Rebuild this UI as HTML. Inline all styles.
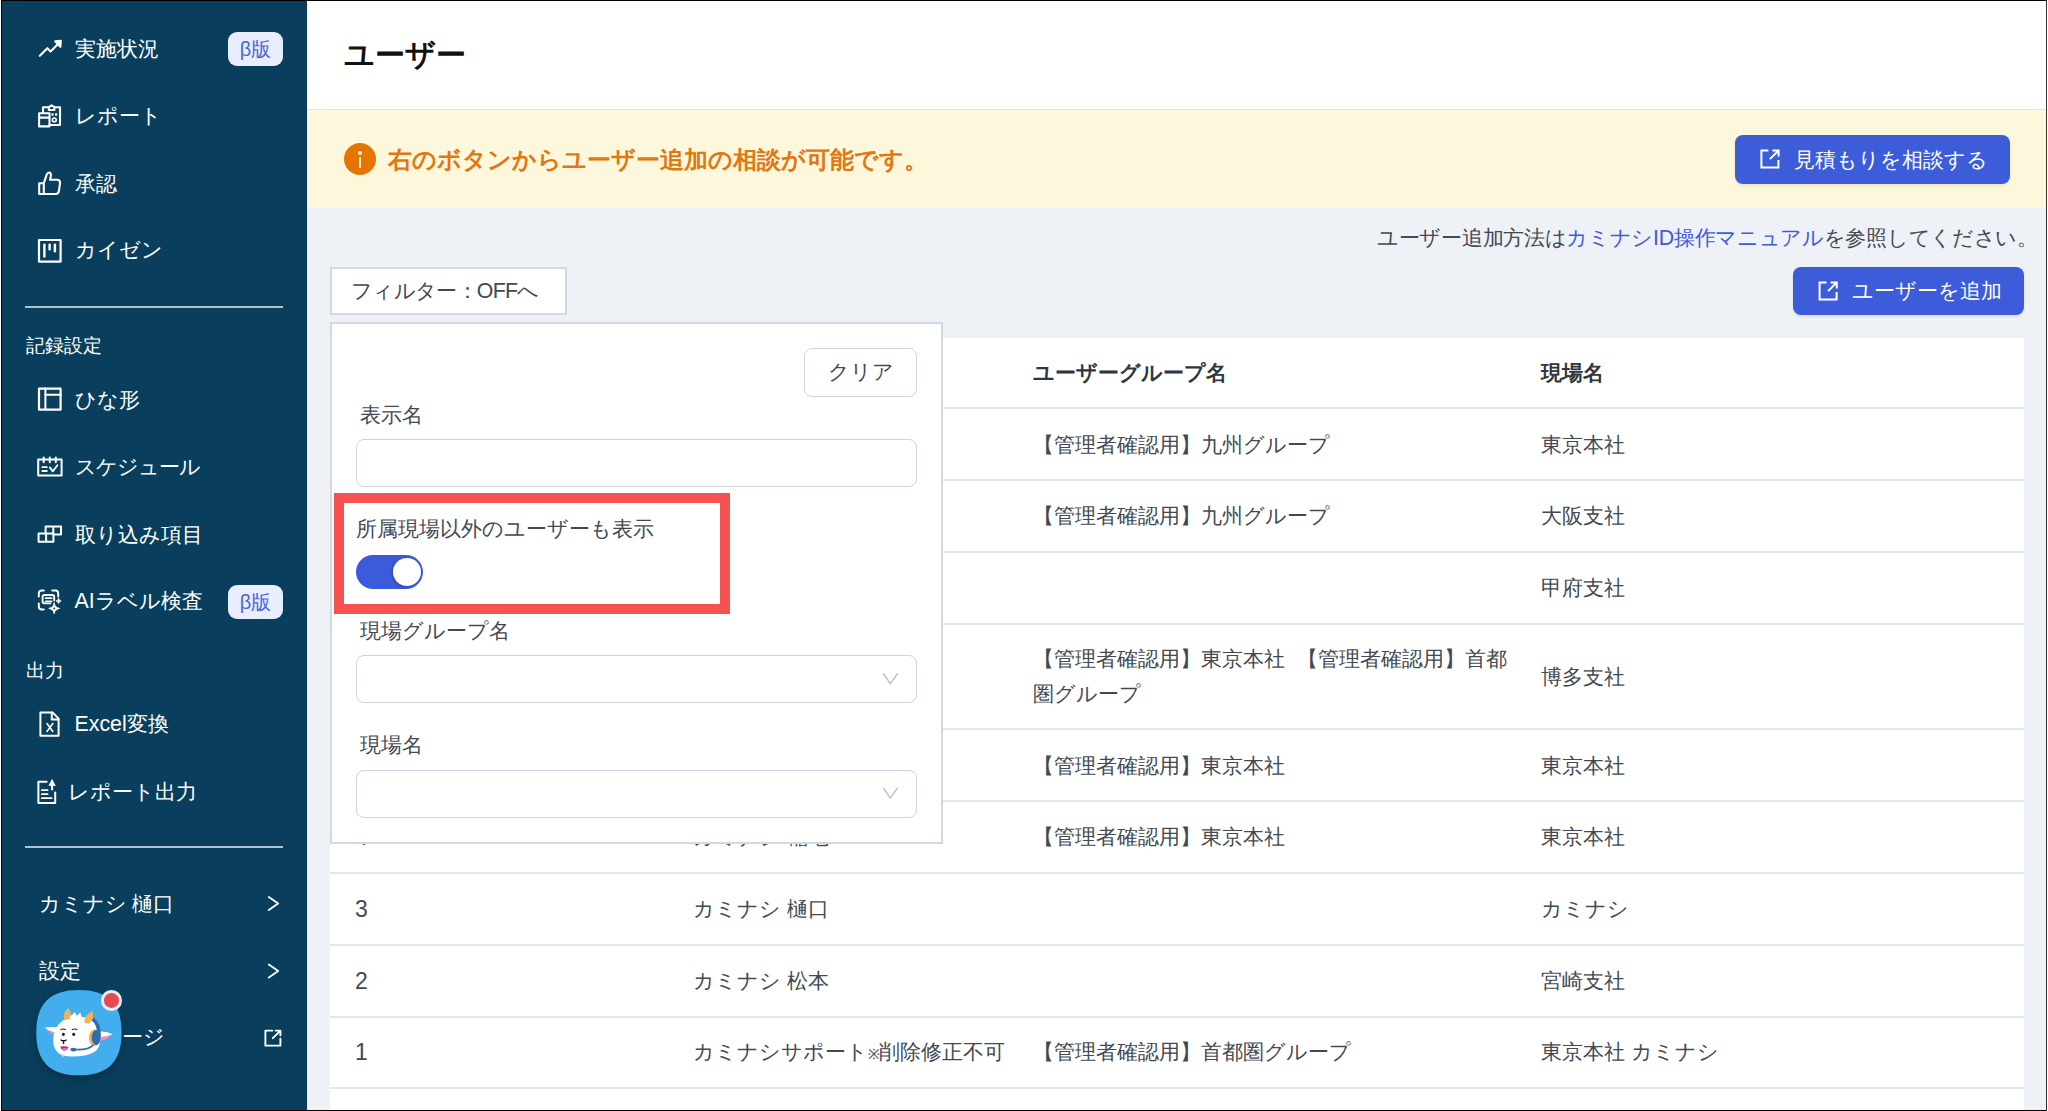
<!DOCTYPE html>
<html><head><meta charset="utf-8">
<style>
*{box-sizing:border-box;margin:0;padding:0}
html,body{width:2048px;height:1111px;overflow:hidden;background:#fff}
body{font-family:"Liberation Sans",sans-serif;position:relative}
.a{position:absolute;white-space:nowrap}
.si{position:absolute;white-space:nowrap;color:#fff;font-size:21.33px;line-height:30px;height:30px}
.sl{position:absolute;white-space:nowrap;color:#fff;font-size:18.67px;line-height:30px;height:30px}
.ic{position:absolute;overflow:visible}
.badge{position:absolute;width:55px;height:34px;border-radius:9px;background:#e8eefd;color:#4c66d9;font-size:20px;line-height:34px;text-align:center}
.dv{position:absolute;left:25px;width:258px;height:2px;background:#b3c0cc}
.t{position:absolute;white-space:nowrap;font-size:21.33px;line-height:30px;height:30px;color:#424952}
.th{font-weight:bold;color:#2f3640}
.rl{position:absolute;left:330px;width:1694px;height:2px;background:#e1e6ed}
</style></head><body>
<!-- background areas -->
<div class="a" style="left:2px;top:1px;width:2044px;height:1109px;background:#eef1f6"></div>
<!-- sidebar -->
<div class="a" style="left:2px;top:1px;width:305px;height:1109px;background:#093f5d"></div>
<div class="a" style="left:306px;top:1px;width:1px;height:1109px;background:#023957"></div>

<!-- header -->
<div class="a" style="left:307px;top:1px;width:1739px;height:108px;background:#fff"></div>
<div class="a" style="left:307px;top:109px;width:1739px;height:1px;background:#dde3ea"></div>
<!-- banner -->
<div class="a" style="left:307px;top:110px;width:1739px;height:98px;background:#fdf8dc"></div>


<!-- ===== SIDEBAR ===== -->
<svg class="ic" style="left:0;top:0" width="310" height="1111" viewBox="0 0 310 1111" fill="none" stroke="#fff" stroke-width="2.1" stroke-linejoin="round" stroke-linecap="round">
 <!-- trend -->
 <polyline points="39.8,55.8 47.4,48.2 50.6,51.4 58,44"/>
 <path d="M55.2,41.3 L60.8,40.9 L60.4,46.7 Z" fill="#fff"/>
 <!-- report -->
 <path d="M43,113 V107.2 H48.8 L51.6,105.4 L54.4,107.2 H60 V125 H49.6"/>
 <path d="M48.8,107.2 V110 H54.4 V107.2"/>
 <rect x="39.1" y="113.2" width="10.4" height="13.2"/>
 <line x1="39.1" y1="117.6" x2="49.5" y2="117.6"/>
 <circle cx="54.3" cy="119.9" r="1.9" stroke-width="1.6"/>
 <rect x="52" y="114" width="1" height="1" stroke-width="1.4"/>
 <rect x="55.6" y="114" width="1" height="1" stroke-width="1.4"/>
 <!-- thumbs -->
 <path d="M39.2,183.2 H43.8 V194 H39.2 Z"/>
 <path d="M43.8,183.2 L46.6,174.8 Q48,172.2 49.6,172.6 Q51.4,173.2 50.8,176.4 L50,179.8 H57.6 Q60.4,180.4 60,183.4 L58.8,191.6 Q58.2,194 55.6,194 H43.8"/>
 <!-- kaizen -->
 <rect x="39" y="240" width="21.6" height="21.6" stroke-width="2.2"/>
 <line x1="44.4" y1="244.6" x2="44.4" y2="256.6" stroke-width="2.4"/>
 <line x1="49.6" y1="244.6" x2="49.6" y2="249.2" stroke-width="2.4"/>
 <line x1="54.9" y1="244.6" x2="54.9" y2="251.2" stroke-width="2.4"/>
 <!-- hinagata -->
 <rect x="39" y="388.6" width="21.6" height="21" stroke-width="2.2"/>
 <line x1="45.4" y1="388.6" x2="45.4" y2="409.6" stroke-width="2"/>
 <line x1="45.4" y1="394.8" x2="60.6" y2="394.8" stroke-width="2"/>
 <!-- schedule -->
 <rect x="38.2" y="459.4" width="23.4" height="16.2" stroke-width="2"/>
 <line x1="43.7" y1="457.4" x2="43.7" y2="462.2" stroke-width="2"/>
 <line x1="49.8" y1="457.4" x2="49.8" y2="462.2" stroke-width="2"/>
 <line x1="55.8" y1="457.4" x2="55.8" y2="462.2" stroke-width="2"/>
 <line x1="42.4" y1="467.2" x2="46.8" y2="467.2" stroke-width="1.8"/>
 <line x1="42.4" y1="471" x2="46.8" y2="471" stroke-width="1.8"/>
 <polyline points="49.8,467.4 52.8,471.4 57.4,465.2" stroke-width="1.8"/>
 <!-- import -->
 <path d="M38.6,533.6 H53.4 V541.8 H38.6 Z M46.1,533.6 V541.8" stroke-width="2"/>
 <path d="M45.6,533.6 V526.4 H61 V534.6 H53.4 M53.3,526.4 V534.6" stroke-width="2"/>
 <!-- AI -->
 <path d="M38.8,596.6 V593.4 Q38.8,590.4 41.8,590.4 H43.8" stroke-width="2"/>
 <path d="M52.2,590.4 H55.4 Q58.2,590.4 58.2,593.4 V596.6" stroke-width="2"/>
 <path d="M38.8,603.6 V606.6 Q38.8,609.6 41.8,609.6 H43.8" stroke-width="2"/>
 <path d="M50.4,603.4 H44.4 Q42.6,603.4 42.6,601.6 V596.8 Q42.6,595 44.4,595 H52.4 Q54.2,595 54.2,596.8 V600.6" stroke-width="1.9"/>
 <line x1="45.6" y1="598.2" x2="51.6" y2="598.2" stroke-width="1.7"/>
 <line x1="45.6" y1="601.4" x2="51.6" y2="601.4" stroke-width="1.7"/>
 <path d="M54.2,603.2 Q54.8,607.6 59.6,608.4 Q54.8,609.2 54.2,613.6 Q53.6,609.2 48.8,608.4 Q53.6,607.6 54.2,603.2 Z" fill="#fff" stroke-width="1"/>
 <circle cx="54.2" cy="608.4" r="0.9" fill="#093f5d" stroke="none"/>
 <path d="M58.6,598.4 Q58.9,600.6 61.2,601 Q58.9,601.4 58.6,603.6 Q58.3,601.4 56,601 Q58.3,600.6 58.6,598.4 Z" fill="#fff" stroke-width="0.8"/>
 <!-- excel -->
 <path d="M40.4,712.6 H52.8 L58.6,718.6 V735.8 H40.4 Z" stroke-width="2"/>
 <path d="M51.8,712.6 V719.6 H58.6" stroke-width="2"/>
 <path d="M47,723.6 L52.8,731.4 M52.8,723.6 L47,731.4" stroke-width="1.6"/>
 <!-- report output -->
 <path d="M46.6,781.8 H38.4 V803 H55.2 V792.4" stroke-width="2"/>
 <line x1="41.8" y1="790.2" x2="47.6" y2="790.2" stroke-width="1.8"/>
 <line x1="41.8" y1="794.2" x2="47.6" y2="794.2" stroke-width="1.8"/>
 <line x1="41.8" y1="798.2" x2="51.6" y2="798.2" stroke-width="1.8"/>
 <line x1="52.1" y1="784" x2="52.1" y2="789.6" stroke-width="2"/>
 <path d="M49.2,785.2 L52.1,779.6 L55,785.2 Z" fill="#fff" stroke-width="0.8"/>
 <!-- chevrons -->
 <polyline points="268.8,897 278.2,903.5 268.8,910" stroke-width="1.8"/>
 <polyline points="268.8,964.5 278.2,971 268.8,977.5" stroke-width="1.8"/>
 <!-- external -->
 <path d="M272.4,1030.6 H265.4 V1045.6 H280.4 V1038.6" stroke-width="1.9"/>
 <path d="M272.8,1038.2 L280.2,1030.8 M275.6,1030.6 H280.4 V1035.4" stroke-width="1.9"/>
</svg>
<div class="dv" style="top:306px"></div>
<div class="dv" style="top:846px"></div>
<div class="si" style="left:74.5px;top:34px">実施状況</div>
<div class="badge" style="left:228px;top:32px">β版</div>
<div class="si" style="left:74.5px;top:101px">レポート</div>
<div class="si" style="left:74.5px;top:169px">承認</div>
<div class="si" style="left:74.5px;top:235px">カイゼン</div>
<div class="sl" style="left:26px;top:331px">記録設定</div>
<div class="si" style="left:74.5px;top:385px">ひな形</div>
<div class="si" style="left:74.5px;top:452px;letter-spacing:-1px">スケジュール</div>
<div class="si" style="left:74.5px;top:520px">取り込み項目</div>
<div class="si" style="left:74.5px;top:586px">AIラベル検査</div>
<div class="badge" style="left:228px;top:585px">β版</div>
<div class="sl" style="left:26px;top:656px">出力</div>
<div class="si" style="left:74.5px;top:709px">Excel変換</div>
<div class="si" style="left:68px;top:777px">レポート出力</div>
<div class="si" style="left:38.5px;top:889px">カミナシ 樋口</div>
<div class="si" style="left:38.5px;top:956px">設定</div>
<div class="si" style="left:33.5px;top:1022px"><span style="color:transparent">ヘルプペ</span>ージ</div>


<!-- ===== MAIN ===== -->
<div class="a" style="left:344px;top:35px;font-size:30px;line-height:40px;font-weight:bold;color:#111">ユーザー</div>
<!-- banner -->
<div class="a" style="left:344px;top:143.2px;width:32px;height:32px;border-radius:50%;background:#e57400"></div>
<div class="a" style="left:358.6px;top:157px;width:2.8px;height:10.6px;background:#fdf8dc;border-radius:1px"></div>
<div class="a" style="left:357.9px;top:151.1px;width:4.2px;height:4.2px;border-radius:50%;background:#fdf8dc"></div>
<div class="a" style="left:388px;top:144.5px;font-size:24px;line-height:30px;font-weight:bold;color:#e2760f">右のボタンからユーザー追加の相談が可能です。</div>
<div class="a" style="left:1735px;top:135px;width:275px;height:49px;border-radius:8px;background:#3c5cd9;box-shadow:0 2px 3px rgba(0,0,0,0.08)"></div>
<div class="t" style="left:1794px;top:145px;color:#fff">見積もりを相談する</div>
<!-- help -->
<div class="t" style="left:1377px;top:223px;letter-spacing:-0.3px">ユーザー追加方法は<span style="color:#3d5bd9">カミナシID操作マニュアル</span>を参照してください。</div>
<div class="a" style="left:1793px;top:267px;width:231px;height:48px;border-radius:8px;background:#3c5cd9;box-shadow:0 2px 3px rgba(0,0,0,0.08)"></div>
<div class="t" style="left:1852px;top:276px;color:#fff">ユーザーを追加</div>
<svg class="ic" style="left:0;top:0" width="2048" height="400" viewBox="0 0 2048 400" fill="none" stroke="#fff" stroke-width="2" stroke-linecap="square">
 <path d="M1767.4,150.4 H1761.4 V167.4 H1778.4 V161"/>
 <path d="M1770.6,158.4 L1778,151 M1773.4,150.4 H1778.6 V155.6"/>
 <path d="M1825.6,282.4 H1819.6 V299.4 H1836.6 V293"/>
 <path d="M1828.8,290.4 L1836.2,283 M1831.6,282.4 H1836.8 V287.6"/>
</svg>
<!-- filter button -->
<div class="a" style="left:330px;top:267px;width:237px;height:48px;background:#fff;border:2px solid #d1d8e3"></div>
<div class="t" style="left:351px;top:276px;letter-spacing:-0.7px">フィルター：OFFへ</div>

<!-- table card -->
<div class="a" style="left:330px;top:338px;width:1694px;height:772px;background:#fff"></div>
<div class="rl" style="top:407px"></div>
<div class="rl" style="top:479px"></div>
<div class="rl" style="top:551px"></div>
<div class="rl" style="top:622.5px"></div>
<div class="rl" style="top:727.5px"></div>
<div class="rl" style="top:800px"></div>
<div class="rl" style="top:871.5px"></div>
<div class="rl" style="top:943.5px"></div>
<div class="rl" style="top:1015.5px"></div>
<div class="rl" style="top:1087px"></div>
<div class="t th" style="left:1033px;top:358px">ユーザーグループ名</div>
<div class="t th" style="left:1541px;top:358px">現場名</div>
<div class="t" style="left:1033px;top:430px">【管理者確認用】九州グループ</div>
<div class="t" style="left:1541px;top:430px">東京本社</div>
<div class="t" style="left:1033px;top:501px">【管理者確認用】九州グループ</div>
<div class="t" style="left:1541px;top:501px">大阪支社</div>
<div class="t" style="left:1541px;top:573px">甲府支社</div>
<div class="t" style="left:1033px;top:642px;line-height:34.5px;height:69px">【管理者確認用】東京本社<span style="display:inline-block;width:12px"></span>【管理者確認用】首都<br>圏グループ</div>
<div class="t" style="left:1541px;top:662px">博多支社</div>
<div class="t" style="left:355px;top:750.0px;font-size:23px">5</div>
<div class="t" style="left:693px;top:750.5px">カミナシ 福岡</div>
<div class="t" style="left:1033px;top:750.5px">【管理者確認用】東京本社</div>
<div class="t" style="left:1541px;top:750.5px">東京本社</div>
<div class="t" style="left:355px;top:821.5px;font-size:23px">4</div>
<div class="t" style="left:693px;top:822px">カミナシ 稲毛</div>
<div class="t" style="left:1033px;top:822px">【管理者確認用】東京本社</div>
<div class="t" style="left:1541px;top:822px">東京本社</div>
<div class="t" style="left:355px;top:893.5px;font-size:23px">3</div>
<div class="t" style="left:693px;top:894px">カミナシ 樋口</div>
<div class="t" style="left:1541px;top:894px">カミナシ</div>
<div class="t" style="left:355px;top:965.5px;font-size:23px">2</div>
<div class="t" style="left:693px;top:966px">カミナシ 松本</div>
<div class="t" style="left:1541px;top:966px">宮崎支社</div>
<div class="t" style="left:355px;top:1036.5px;font-size:23px">1</div>
<div class="t" style="left:693px;top:1037px">カミナシサポート<span style="font-size:14px;letter-spacing:-1px">※</span>削除修正不可</div>
<div class="t" style="left:1033px;top:1037px">【管理者確認用】首都圏グループ</div>
<div class="t" style="left:1541px;top:1037px">東京本社 カミナシ</div>

<!-- filter panel -->
<div class="a" style="left:330px;top:322px;width:612.5px;height:522px;background:#fff;border:2px solid #d3d9e3"></div>
<div class="a" style="left:804px;top:348px;width:113px;height:49px;border-radius:8px;border:1.5px solid #ccd4e0;background:#fff"></div>
<div class="t" style="left:828px;top:357px">クリア</div>
<div class="t" style="left:360px;top:399.5px">表示名</div>
<div class="a" style="left:356px;top:439px;width:561px;height:47.5px;border-radius:8px;border:1.5px solid #ccd4e0;background:#fff"></div>
<div class="a" style="left:334px;top:493px;width:396px;height:121px;border:10px solid #f65252"></div>
<div class="t" style="left:355.5px;top:514px">所属現場以外のユーザーも表示</div>
<div class="a" style="left:356px;top:555px;width:67px;height:34px;border-radius:17px;background:#3b5bdb"></div>
<div class="a" style="left:392.5px;top:558px;width:28px;height:28px;border-radius:50%;background:#fff;box-shadow:-1px 1px 3px rgba(0,0,40,0.25)"></div>
<div class="t" style="left:360px;top:616px">現場グループ名</div>
<div class="a" style="left:356px;top:655px;width:561px;height:48px;border-radius:8px;border:1.5px solid #ccd4e0;background:#fff"></div>
<div class="t" style="left:360px;top:730px">現場名</div>
<div class="a" style="left:356px;top:769.5px;width:561px;height:48px;border-radius:8px;border:1.5px solid #ccd4e0;background:#fff"></div>
<svg class="ic" style="left:0;top:0" width="1000" height="900" viewBox="0 0 1000 900" fill="none" stroke="#b9bcc2" stroke-width="1.4">
 <polyline points="883.2,673.4 890.4,683.6 897.6,673.4"/>
 <polyline points="883.2,787.9 890.4,798.1 897.6,787.9"/>
</svg>


<!-- avatar -->
<svg class="ic" style="left:28px;top:984px;filter:drop-shadow(0 3px 5px rgba(0,0,0,0.28))" width="104" height="104" viewBox="0 0 1111 1111">
 <path d="M88,520 C88,210 234,65 544,65 C854,65 1000,210 1000,520 C1000,830 854,975 544,975 C234,975 88,830 88,520 Z" fill="#42aeee"/>
 <!-- ears -->
 <path d="M180,468 Q270,458 350,478 L340,560 Q240,545 180,468 Z" fill="#ee8fc0"/>
 <path d="M180,468 Q270,452 352,470 L348,520 Q250,520 180,468 Z" fill="#fff"/>
 <path d="M905,538 Q830,610 760,605 L715,515 Q820,500 905,538 Z" fill="#ee8fc0"/>
 <path d="M905,538 Q820,560 750,575 L715,515 Q820,495 905,538 Z" fill="#fff"/>
 <!-- horns -->
 <path d="M385,380 Q370,300 430,262 Q470,300 455,375 Z" fill="#f2b25c"/>
 <path d="M600,420 Q600,320 690,292 Q710,380 660,430 Z" fill="#f2b25c"/>
 <!-- head -->
 <path d="M270,620 Q265,470 360,400 Q420,350 470,330 L500,300 L520,340 L560,305 L570,350 Q650,360 720,420 Q780,500 770,620 Q760,730 620,760 Q470,790 360,760 Q275,720 270,620 Z" fill="#fff"/>
 <path d="M385,390 Q375,310 430,275 Q455,320 450,370 Z" fill="#f2b25c"/>
 <path d="M600,415 Q605,330 688,300 Q700,380 655,425 Z" fill="#f2b25c"/>
 <!-- headset -->
 <path d="M690,375 Q760,420 760,560" fill="none" stroke="#2f6db0" stroke-width="38"/>
 <ellipse cx="712" cy="575" rx="62" ry="88" fill="#f2b25c"/>
 <ellipse cx="728" cy="572" rx="48" ry="80" fill="#2f6db0"/>
 <path d="M700,650 Q640,710 500,700" fill="none" stroke="#2f6db0" stroke-width="18"/>
 <ellipse cx="485" cy="700" rx="32" ry="20" fill="#2f6db0"/>
 <!-- face -->
 <path d="M345,488 Q375,475 405,488" fill="none" stroke="#222" stroke-width="11"/>
 <path d="M468,488 Q498,475 528,488" fill="none" stroke="#222" stroke-width="11"/>
 <ellipse cx="378" cy="538" rx="15" ry="18" fill="#111"/>
 <ellipse cx="488" cy="538" rx="15" ry="18" fill="#111"/>
 <path d="M348,595 Q380,618 412,595 M380,610 L380,640" fill="none" stroke="#111" stroke-width="14"/>
 <path d="M345,668 Q390,660 432,672 Q415,712 385,712 Q355,708 345,668 Z" fill="#c0287a"/>
 <path d="M365,690 Q390,680 415,690 Q405,712 385,712 Q368,708 365,690 Z" fill="#f07ab8"/>
 <path d="M355,745 L375,785 L395,748 Z" fill="#dde"/>
</svg>
<div class="a" style="left:101px;top:990px;width:20.6px;height:20.6px;border-radius:50%;background:#e54a55;border:3px solid #ececec"></div>

<!-- frame border -->
<div class="a" style="left:1px;top:0;width:2046px;height:1px;background:#000"></div>
<div class="a" style="left:1px;top:1110px;width:2046px;height:1px;background:#000"></div>
<div class="a" style="left:1px;top:0;width:1px;height:1111px;background:#000"></div>
<div class="a" style="left:2046px;top:0;width:1px;height:1111px;background:#333"></div>
</body></html>
